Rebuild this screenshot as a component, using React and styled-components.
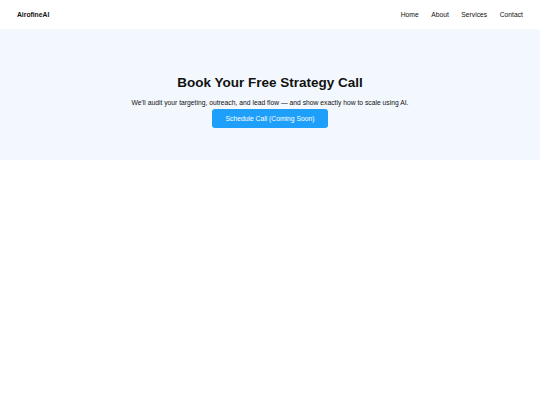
import React from "react";
import styled, { createGlobalStyle } from "styled-components";

const Global = createGlobalStyle`
  html, body { margin: 0; padding: 0; background: #ffffff; }
  body { font-family: "Liberation Sans", Arial, sans-serif; color: #111111; }
  * { box-sizing: border-box; }
`;

const Header = styled.header`
  height: 29px;
  display: flex;
  align-items: center;
  justify-content: space-between;
  padding: 0 17px;
  background: #ffffff;
`;

const Logo = styled.div`
  font-size: 6.75px;
  font-weight: 700;
  color: #111111;
`;

const Nav = styled.nav`
  display: flex;
  gap: 12.5px;
`;

const NavLink = styled.a`
  font-size: 6.75px;
  color: #111111;
  text-decoration: none;
`;

const Hero = styled.section`
  background: #f3f8ff;
  height: 131px;
  display: flex;
  flex-direction: column;
  align-items: center;
  padding-top: 46px;
`;

const Title = styled.h2`
  margin: 0 0 8px;
  font-size: 13.5px;
  line-height: 16px;
  font-weight: 700;
  color: #111111;
`;

const Lead = styled.p`
  margin: 0 0 2px;
  font-size: 6.75px;
  line-height: 8px;
  color: #111111;
`;

const Button = styled.button`
  width: 116px;
  height: 19px;
  border: none;
  border-radius: 3px;
  background: #1e9ffa;
  color: #ffffff;
  font-family: "Liberation Sans", Arial, sans-serif;
  font-size: 6.75px;
  padding: 0;
  cursor: pointer;
`;

export default function App() {
  return (
    <>
      <Global />
      <Header>
        <Logo>AirofineAI</Logo>
        <Nav>
          <NavLink href="#">Home</NavLink>
          <NavLink href="#">About</NavLink>
          <NavLink href="#">Services</NavLink>
          <NavLink href="#">Contact</NavLink>
        </Nav>
      </Header>
      <Hero>
        <Title>Book Your Free Strategy Call</Title>
        <Lead>We'll audit your targeting, outreach, and lead flow — and show exactly how to scale using AI.</Lead>
        <Button>Schedule Call (Coming Soon)</Button>
      </Hero>
    </>
  );
}
